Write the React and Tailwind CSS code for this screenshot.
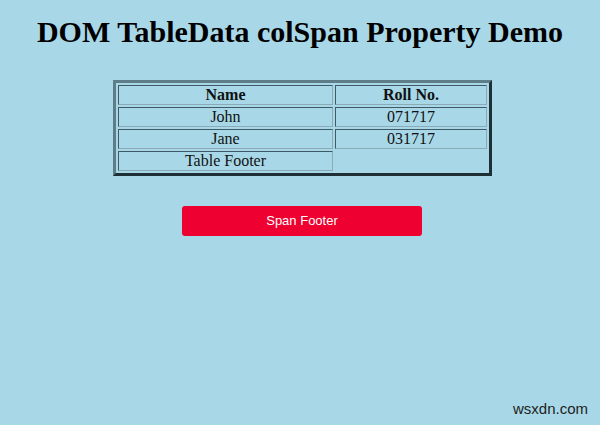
import React from "react";

const rows = [
  { name: "John", roll: "071717" },
  { name: "Jane", roll: "031717" },
];

// inset-looking cell border
const cell =
  "h-[20px] p-0 leading-[18px] border border-t-[#3f5a64] border-l-[#3f5a64] border-b-[#8aaab5] border-r-[#8aaab5] text-center";

const App = () => {
  return (
    <div className="relative w-[600px] h-[425px] bg-[#a8d8e8] overflow-hidden" style={{ fontFamily: '"Liberation Serif", serif' }}>
      <h1 className="pt-[14px] text-center text-[30px] leading-[36px] font-bold text-black">
        DOM TableData colSpan Property Demo
      </h1>

      {/* Table */}
      <div className="mt-[30px] flex justify-center">
        <table className="ml-[5px] border-separate border-spacing-[2px] border-[3px] border-t-[#5f7d88] border-l-[#5f7d88] border-b-[#1f2f36] border-r-[#1f2f36] bg-[#a8d8e8] text-[16px] text-[#111]">
          <tbody>
            <tr>
              <th className={`w-[215px] font-bold ${cell}`}>Name</th>
              <th className={`w-[152px] font-bold ${cell}`}>Roll No.</th>
            </tr>
            {rows.map((r) => (
              <tr key={r.name}>
                <td className={cell}>{r.name}</td>
                <td className={cell}>{r.roll}</td>
              </tr>
            ))}
            <tr>
              <td className={cell}>Table Footer</td>
              <td className="p-0"></td>
            </tr>
          </tbody>
        </table>
      </div>

      {/* Button */}
      <div className="mt-[30px] flex justify-center">
        <button className="ml-[4px] w-[240px] h-[30px] rounded-[3px] bg-[#ee0030] text-white text-[13px]" style={{ fontFamily: '"Liberation Sans", Arial, sans-serif' }}>
          Span Footer
        </button>
      </div>

      <div className="absolute right-[12px] bottom-[5px] text-[15px] text-[#222]" style={{ fontFamily: '"Liberation Sans", Arial, sans-serif' }}>
        wsxdn.com
      </div>
    </div>
  );
};

export default App;
